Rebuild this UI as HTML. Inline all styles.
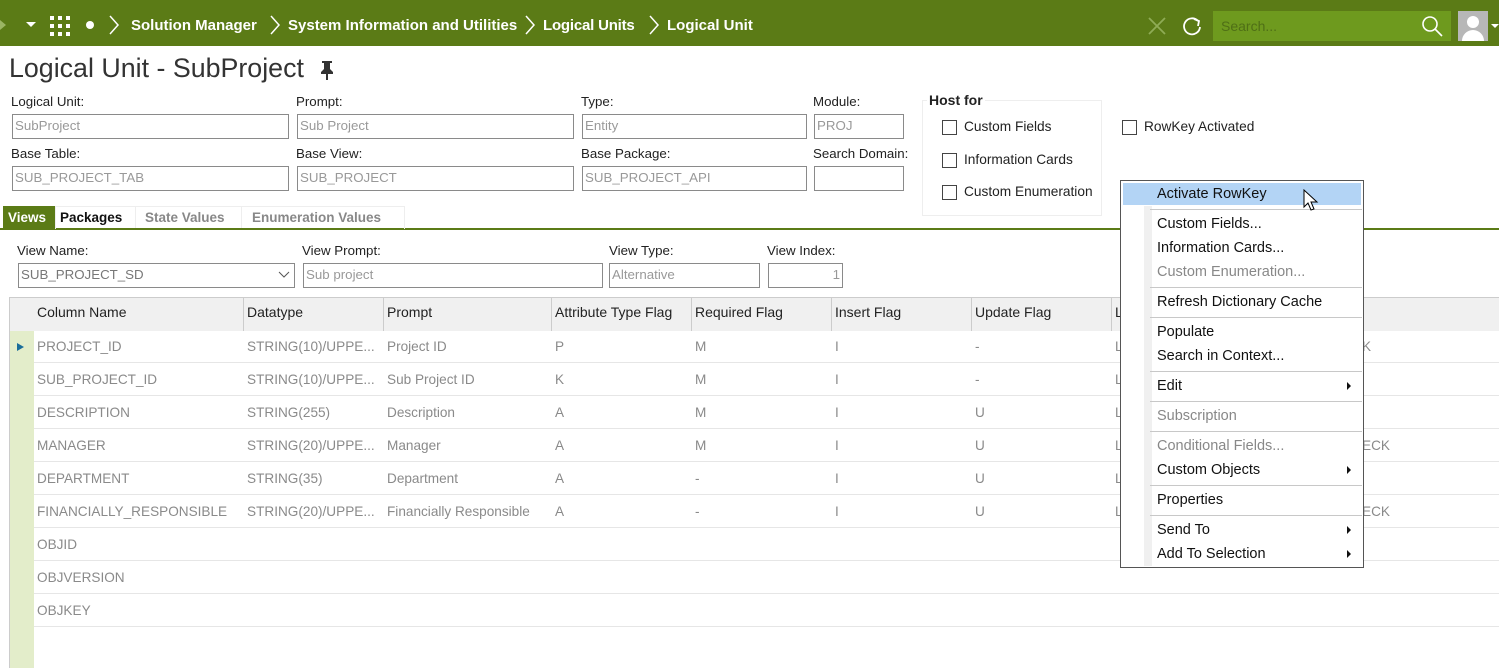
<!DOCTYPE html><html><head><style>
*{margin:0;padding:0;box-sizing:border-box}
body{width:1499px;height:668px;overflow:hidden;background:#fff;font-family:"Liberation Sans",sans-serif;position:relative;color:#222}
.a{position:absolute;white-space:nowrap}
.hdr{position:absolute;left:0;top:0;width:1499px;height:46px;background:#5b7b16}
.bc{color:#fff;font-weight:bold;font-size:15px;top:16px}
.lbl{font-size:13.3px;color:#222}
.inp{position:absolute;border:1px solid #8a8a8a;height:25px;font-size:13.3px;color:#999;padding:3px 2px;background:#fff}
.cb{position:absolute;width:15px;height:15px;border:1px solid #444;background:#fff}
.cbl{font-size:13.7px;color:#222}
.cell{font-size:13.6px;color:#8a8a8a}
.hcell{font-size:14px;color:#222}
.mi{position:absolute;left:1157px;font-size:14.5px;color:#111}
.dis{color:#888}
.sep{position:absolute;left:1150px;width:212px;height:1px;background:#c8c8c8}
.arr{position:absolute;left:1347px;width:0;height:0;border-left:4px solid #111;border-top:4px solid transparent;border-bottom:4px solid transparent}
</style></head><body>
<div class="hdr"></div>
<div class="a" style="left:0;top:20px;width:0;height:0;border-left:6px solid #9bb563;border-top:5px solid transparent;border-bottom:5px solid transparent"></div>
<div class="a" style="left:26px;top:22px;border-top:5px solid #fff;border-left:5px solid transparent;border-right:5px solid transparent"></div>
<svg class="a" style="left:49px;top:15px" width="22" height="22"><g fill="#fff"><rect x="1" y="1" width="4" height="4"/><rect x="9" y="1" width="4" height="4"/><rect x="17" y="1" width="4" height="4"/><rect x="1" y="9" width="4" height="4"/><rect x="9" y="9" width="4" height="4"/><rect x="17" y="9" width="4" height="4"/><rect x="1" y="17" width="4" height="4"/><rect x="9" y="17" width="4" height="4"/><rect x="17" y="17" width="4" height="4"/></g></svg>
<div class="a" style="left:86px;top:21px;width:8px;height:8px;border-radius:50%;background:#fff"></div>
<svg class="a" style="left:0;top:0" width="760" height="46" fill="none" stroke="#fff" stroke-width="1.5"><path d="M110 16l8 9-8 9M271 16l8 9-8 9M526 16l8 9-8 9M650 16l8 9-8 9"/></svg>
<div class="a bc" style="left:131px;top:17px">Solution Manager</div>
<div class="a bc" style="left:288px;top:17px">System Information and Utilities</div>
<div class="a bc" style="left:543px;top:17px;letter-spacing:-0.2px">Logical Units</div>
<div class="a bc" style="left:667px;top:17px">Logical Unit</div>
<svg class="a" style="left:1145px;top:13px" width="60" height="26" fill="none" stroke-width="1.8"><path d="M4 5l16 16M20 5L4 21" stroke="#8fac55"/><path d="M53 8a8 8 0 1 0 2 6" stroke="#fff"/><path d="M49 6l5 2-1 5" stroke="#fff"/></svg>
<div class="a" style="left:1213px;top:11px;width:238px;height:30px;background:#6e9a1e"></div>
<div class="a" style="left:1221px;top:18px;font-size:14px;color:#4f6f16">Search...</div>
<svg class="a" style="left:1420px;top:14px" width="24" height="24" fill="none" stroke="#fff" stroke-width="1.6"><circle cx="10" cy="10" r="7"/><path d="M15 15l7 7"/></svg>
<div class="a" style="left:1458px;top:11px;width:30px;height:30px;background:#b7b7b7;overflow:hidden"><div class="a" style="left:9px;top:5px;width:12px;height:12px;border-radius:50%;background:#fff"></div><div class="a" style="left:4px;top:19px;width:22px;height:16px;border-radius:11px 11px 0 0;background:#fff"></div></div>
<div class="a" style="left:1491px;top:24px;border-top:4px solid #fff;border-left:4px solid transparent;border-right:4px solid transparent"></div>

<div class="a" style="left:9px;top:53px;font-size:26.8px;color:#333">Logical Unit - SubProject</div>
<svg class="a" style="left:319px;top:60px" width="16" height="20" fill="#333"><path d="M3 1h10v2h-2v6l3 3v2H9v6H7v-6H2v-2l3-3V3H3z"/></svg>

<div class="a lbl" style="left:11px;top:94px">Logical Unit:</div>
<div class="a lbl" style="left:296px;top:94px">Prompt:</div>
<div class="a lbl" style="left:581px;top:94px">Type:</div>
<div class="a lbl" style="left:813px;top:94px">Module:</div>
<div class="inp" style="left:12px;top:114px;width:277px">SubProject</div>
<div class="inp" style="left:297px;top:114px;width:277px">Sub Project</div>
<div class="inp" style="left:582px;top:114px;width:225px">Entity</div>
<div class="inp" style="left:814px;top:114px;width:90px">PROJ</div>
<div class="a lbl" style="left:11px;top:146px">Base Table:</div>
<div class="a lbl" style="left:296px;top:146px">Base View:</div>
<div class="a lbl" style="left:581px;top:146px">Base Package:</div>
<div class="a lbl" style="left:813px;top:146px">Search Domain:</div>
<div class="inp" style="left:12px;top:166px;width:277px">SUB_PROJECT_TAB</div>
<div class="inp" style="left:297px;top:166px;width:277px">SUB_PROJECT</div>
<div class="inp" style="left:582px;top:166px;width:225px">SUB_PROJECT_API</div>
<div class="inp" style="left:814px;top:166px;width:90px"></div>

<div class="a" style="left:922px;top:100px;width:180px;height:116px;border:1px solid #eee"></div>
<div class="a" style="left:927px;top:92px;background:#fff;padding:0 2px;font-size:14px;font-weight:bold">Host for</div>
<div class="cb" style="left:942px;top:120px"></div><div class="a cbl" style="left:964px;top:119px">Custom Fields</div>
<div class="cb" style="left:942px;top:153px"></div><div class="a cbl" style="left:964px;top:152px">Information Cards</div>
<div class="cb" style="left:942px;top:185px"></div><div class="a cbl" style="left:964px;top:184px">Custom Enumeration</div>
<div class="cb" style="left:1122px;top:120px"></div><div class="a cbl" style="left:1144px;top:119px">RowKey Activated</div>

<div class="a" style="left:0;top:228px;width:1499px;height:2px;background:#5b7b16"></div>
<div class="a" style="left:3px;top:206px;width:52px;height:23px;background:#5b7b16"></div>
<div class="a" style="left:55px;top:206px;width:350px;height:23px;border:1px solid #eee;border-bottom:none"></div>
<div class="a" style="left:8px;top:210px;font-size:13.5px;font-weight:bold;color:#fff">Views</div>
<div class="a" style="left:60px;top:210px;font-size:13.5px;font-weight:bold;color:#111">Packages</div>
<div class="a" style="left:145px;top:210px;font-size:13.5px;font-weight:bold;color:#888">State Values</div>
<div class="a" style="left:252px;top:210px;font-size:13.5px;font-weight:bold;color:#888">Enumeration Values</div>
<div class="a" style="left:241px;top:207px;width:1px;height:21px;background:#eee"></div>
<div class="a" style="left:135px;top:207px;width:1px;height:21px;background:#eee"></div>

<div class="a lbl" style="left:17px;top:243px">View Name:</div>
<div class="a lbl" style="left:302px;top:243px">View Prompt:</div>
<div class="a lbl" style="left:609px;top:243px">View Type:</div>
<div class="a lbl" style="left:767px;top:243px">View Index:</div>
<div class="inp" style="left:18px;top:263px;width:277px;color:#777">SUB_PROJECT_SD</div>
<svg class="a" style="left:278px;top:271px" width="12" height="8" fill="none" stroke="#555"><path d="M1 1l5 5 5-5"/></svg>
<div class="inp" style="left:303px;top:263px;width:300px">Sub project</div>
<div class="inp" style="left:609px;top:263px;width:151px">Alternative</div>
<div class="inp" style="left:768px;top:263px;width:75px;text-align:right">1</div>

<div class="a" style="left:9px;top:297px;width:1490px;height:1px;background:#ccc"></div>
<div class="a" style="left:9px;top:297px;width:1px;height:371px;background:#ccc"></div>
<div class="a" style="left:10px;top:298px;width:1489px;height:33px;background:#f0f0f0"></div>
<div class="a" style="left:10px;top:331px;width:24px;height:337px;background:#e3edca"></div>
<div class="a" style="left:17px;top:343px;border-left:7px solid #1a6d9a;border-top:4px solid transparent;border-bottom:4px solid transparent"></div>
<div class="a hcell" style="left:37px;top:304px">Column Name</div>
<div class="a hcell" style="left:247px;top:304px">Datatype</div>
<div class="a hcell" style="left:387px;top:304px">Prompt</div>
<div class="a hcell" style="left:555px;top:304px">Attribute Type Flag</div>
<div class="a hcell" style="left:695px;top:304px">Required Flag</div>
<div class="a hcell" style="left:835px;top:304px">Insert Flag</div>
<div class="a hcell" style="left:975px;top:304px">Update Flag</div>
<div class="a hcell" style="left:1115px;top:304px">L</div>
<div class="a" style="left:243px;top:298px;width:1px;height:33px;background:#ccc"></div>
<div class="a" style="left:383px;top:298px;width:1px;height:33px;background:#ccc"></div>
<div class="a" style="left:551px;top:298px;width:1px;height:33px;background:#ccc"></div>
<div class="a" style="left:691px;top:298px;width:1px;height:33px;background:#ccc"></div>
<div class="a" style="left:831px;top:298px;width:1px;height:33px;background:#ccc"></div>
<div class="a" style="left:971px;top:298px;width:1px;height:33px;background:#ccc"></div>
<div class="a" style="left:1111px;top:298px;width:1px;height:33px;background:#ccc"></div>

<div style="position:absolute;left:34px;top:330px;width:1465px">
<div style="height:33px;border-bottom:1px solid #e6e6e6;position:relative"><span class="a cell" style="left:3px;top:9px">PROJECT_ID</span><span class="a cell" style="left:213px;top:9px">STRING(10)/UPPE...</span><span class="a cell" style="left:353px;top:9px">Project ID</span><span class="a cell" style="left:521px;top:9px">P</span><span class="a cell" style="left:661px;top:9px">M</span><span class="a cell" style="left:801px;top:9px">I</span><span class="a cell" style="left:941px;top:9px">-</span><span class="a cell" style="left:1081px;top:9px">L</span><span class="a cell" style="left:1328px;top:9px">K</span></div>
<div style="height:33px;border-bottom:1px solid #e6e6e6;position:relative"><span class="a cell" style="left:3px;top:9px">SUB_PROJECT_ID</span><span class="a cell" style="left:213px;top:9px">STRING(10)/UPPE...</span><span class="a cell" style="left:353px;top:9px">Sub Project ID</span><span class="a cell" style="left:521px;top:9px">K</span><span class="a cell" style="left:661px;top:9px">M</span><span class="a cell" style="left:801px;top:9px">I</span><span class="a cell" style="left:941px;top:9px">-</span><span class="a cell" style="left:1081px;top:9px">L</span></div>
<div style="height:33px;border-bottom:1px solid #e6e6e6;position:relative"><span class="a cell" style="left:3px;top:9px">DESCRIPTION</span><span class="a cell" style="left:213px;top:9px">STRING(255)</span><span class="a cell" style="left:353px;top:9px">Description</span><span class="a cell" style="left:521px;top:9px">A</span><span class="a cell" style="left:661px;top:9px">M</span><span class="a cell" style="left:801px;top:9px">I</span><span class="a cell" style="left:941px;top:9px">U</span><span class="a cell" style="left:1081px;top:9px">L</span></div>
<div style="height:33px;border-bottom:1px solid #e6e6e6;position:relative"><span class="a cell" style="left:3px;top:9px">MANAGER</span><span class="a cell" style="left:213px;top:9px">STRING(20)/UPPE...</span><span class="a cell" style="left:353px;top:9px">Manager</span><span class="a cell" style="left:521px;top:9px">A</span><span class="a cell" style="left:661px;top:9px">M</span><span class="a cell" style="left:801px;top:9px">I</span><span class="a cell" style="left:941px;top:9px">U</span><span class="a cell" style="left:1081px;top:9px">L</span><span class="a cell" style="left:1328px;top:9px">ECK</span></div>
<div style="height:33px;border-bottom:1px solid #e6e6e6;position:relative"><span class="a cell" style="left:3px;top:9px">DEPARTMENT</span><span class="a cell" style="left:213px;top:9px">STRING(35)</span><span class="a cell" style="left:353px;top:9px">Department</span><span class="a cell" style="left:521px;top:9px">A</span><span class="a cell" style="left:661px;top:9px">-</span><span class="a cell" style="left:801px;top:9px">I</span><span class="a cell" style="left:941px;top:9px">U</span><span class="a cell" style="left:1081px;top:9px">L</span></div>
<div style="height:33px;border-bottom:1px solid #e6e6e6;position:relative"><span class="a cell" style="left:3px;top:9px">FINANCIALLY_RESPONSIBLE</span><span class="a cell" style="left:213px;top:9px">STRING(20)/UPPE...</span><span class="a cell" style="left:353px;top:9px">Financially Responsible</span><span class="a cell" style="left:521px;top:9px">A</span><span class="a cell" style="left:661px;top:9px">-</span><span class="a cell" style="left:801px;top:9px">I</span><span class="a cell" style="left:941px;top:9px">U</span><span class="a cell" style="left:1081px;top:9px">L</span><span class="a cell" style="left:1328px;top:9px">ECK</span></div>
<div style="height:33px;border-bottom:1px solid #e6e6e6;position:relative"><span class="a cell" style="left:3px;top:9px">OBJID</span></div>
<div style="height:33px;border-bottom:1px solid #e6e6e6;position:relative"><span class="a cell" style="left:3px;top:9px">OBJVERSION</span></div>
<div style="height:33px;border-bottom:1px solid #e6e6e6;position:relative"><span class="a cell" style="left:3px;top:9px">OBJKEY</span></div>
</div>

<div class="a" style="left:1120px;top:180px;width:244px;height:388px;background:#fff;border:1px solid #555"></div>
<div class="a" style="left:1144px;top:206px;width:8px;height:360px;background:#f0f0f0"></div>
<div class="a" style="left:1123px;top:183px;width:238px;height:22px;background:#b3d4f5"></div>
<div class="mi" style="top:186px">Activate RowKey</div>
<div class="sep" style="top:209px"></div>
<div class="mi" style="top:216px">Custom Fields...</div>
<div class="mi" style="top:240px">Information Cards...</div>
<div class="mi dis" style="top:264px">Custom Enumeration...</div>
<div class="sep" style="top:287px"></div>
<div class="mi" style="top:294px">Refresh Dictionary Cache</div>
<div class="sep" style="top:317px"></div>
<div class="mi" style="top:324px">Populate</div>
<div class="mi" style="top:348px">Search in Context...</div>
<div class="sep" style="top:371px"></div>
<div class="mi" style="top:378px">Edit</div><div class="arr" style="top:382px"></div>
<div class="sep" style="top:401px"></div>
<div class="mi dis" style="top:408px">Subscription</div>
<div class="sep" style="top:431px"></div>
<div class="mi dis" style="top:438px">Conditional Fields...</div>
<div class="mi" style="top:462px">Custom Objects</div><div class="arr" style="top:466px"></div>
<div class="sep" style="top:485px"></div>
<div class="mi" style="top:492px">Properties</div>
<div class="sep" style="top:515px"></div>
<div class="mi" style="top:522px">Send To</div><div class="arr" style="top:526px"></div>
<div class="mi" style="top:546px">Add To Selection</div><div class="arr" style="top:550px"></div>
<svg class="a" style="left:1303px;top:189px" width="16" height="24"><path d="M1 1v17l4-4 3 7 3-1-3-7h6z" fill="#fff" stroke="#000" stroke-width="1"/></svg>
</body></html>
